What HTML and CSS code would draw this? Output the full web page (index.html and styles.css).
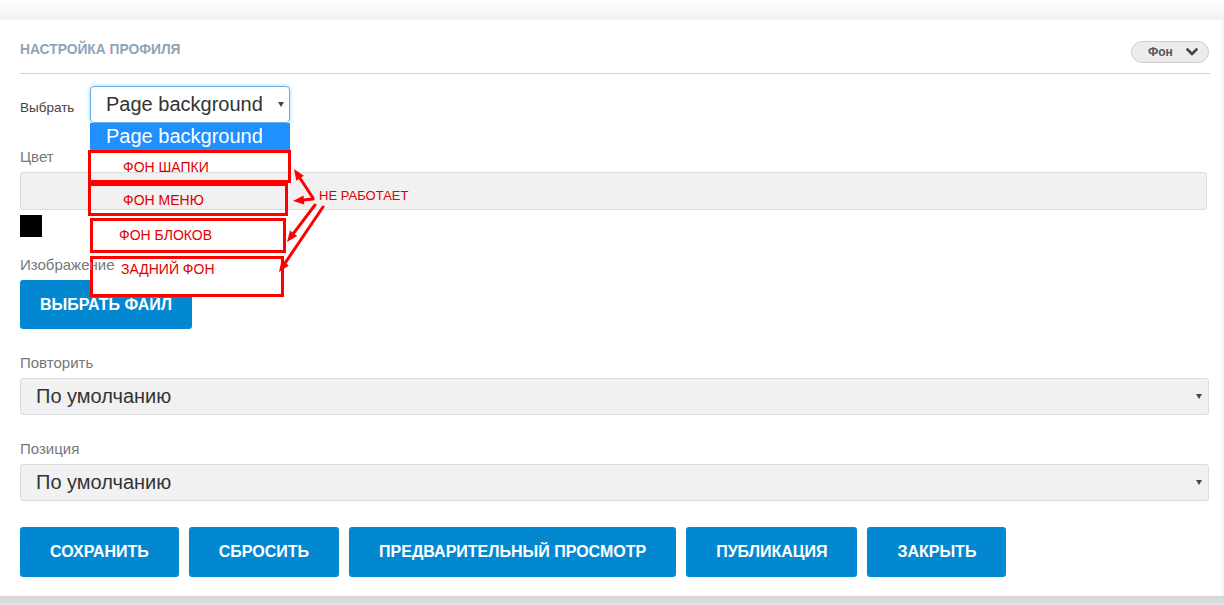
FILE: index.html
```html
<!DOCTYPE html>
<html lang="ru">
<head>
<meta charset="utf-8">
<title>Настройка профиля</title>
<link rel="stylesheet" href="styles.css">
</head>
<body>
<div class="card">
  <div class="head">
    <h2 class="title">НАСТРОЙКА ПРОФИЛЯ</h2>
    <div class="pill"><span>Фон</span><svg class="chev" width="12" height="8" viewBox="0 0 12 8"><polyline points="1.5,1.5 6,6 10.5,1.5" fill="none" stroke="#444" stroke-width="2.6" stroke-linecap="round" stroke-linejoin="round"/></svg></div>
  </div>

  <div class="pick-row">
    <span class="pick-label">Выбрать</span>
    <div class="select-box"><span>Page background</span><i class="caret"></i></div>
  </div>

  <div class="group">
    <div class="label">Цвет</div>
    <div class="input"></div>
    <div class="swatch"></div>
  </div>

  <div class="group group-img">
    <div class="label label-top">Изображение</div>
    <button class="btn">ВЫБРАТЬ ФАЙЛ</button>
  </div>

  <div class="group">
    <div class="label">Повторить</div>
    <div class="select-wide"><span>По умолчанию</span><i class="caret"></i></div>
  </div>

  <div class="group">
    <div class="label">Позиция</div>
    <div class="select-wide"><span>По умолчанию</span><i class="caret"></i></div>
  </div>

  <div class="actions">
    <button class="btn btn-lg">СОХРАНИТЬ</button>
    <button class="btn btn-lg">СБРОСИТЬ</button>
    <button class="btn btn-lg">ПРЕДВАРИТЕЛЬНЫЙ ПРОСМОТР</button>
    <button class="btn btn-lg">ПУБЛИКАЦИЯ</button>
    <button class="btn btn-lg">ЗАКРЫТЬ</button>
  </div>
</div>

<div class="dropdown">Page background</div>

<div class="notes">
  <div class="box b1">ФОН ШАПКИ</div>
  <div class="box b2">ФОН МЕНЮ</div>
  <div class="box b3">ФОН БЛОКОВ</div>
  <div class="box b4">ЗАДНИЙ ФОН</div>
  <div class="note-text">НЕ РАБОТАЕТ</div>
  <svg class="arrows" width="400" height="300" viewBox="0 0 400 300">
    <g stroke="#f00" stroke-width="3" stroke-linecap="round" fill="none">
      <line x1="313" y1="198" x2="298.4" y2="175.7"/>
      <line x1="313" y1="199" x2="301" y2="200.2"/>
      <line x1="315" y1="205" x2="291.8" y2="235.6"/>
      <line x1="323" y1="207" x2="283.5" y2="265.4"/>
    </g>
    <g fill="#f00">
      <polygon points="294,169 303.8,175.7 296.3,180.7"/>
      <polygon points="293,201 303.5,195.4 304.3,204.4"/>
      <polygon points="287,242 297.2,235.9 290,230.5"/>
      <polygon points="279,272 288.9,265.4 281.5,260.4"/>
    </g>
  </svg>
</div>
</body>
</html>
```

FILE: styles.css
```css
html, body {
  margin: 0;
  padding: 0;
}
body {
  position: relative;
  width: 1224px;
  height: 605px;
  overflow: hidden;
  background: linear-gradient(to bottom, #ffffff 0, #f1f1f1 19px, #f1f1f1 20px, #d4d4d4 596px, #e2e2e2 605px);
  font-family: "Liberation Sans", Arial, sans-serif;
}
.card {
  margin-top: 20px;
  width: 1224px;
  box-sizing: border-box;
  padding: 0 15px 19px 20px;
  background: #fff;
  box-shadow: inset -4px 0 4px -3px rgba(0, 0, 0, 0.08);
}
.head {
  display: flex;
  align-items: flex-end;
  justify-content: space-between;
  height: 54px;
  box-sizing: border-box;
  padding-bottom: 10px;
  margin-right: -1px;
  border-bottom: 1px solid #cfcfcf;
}
.title {
  margin: 0 0 5px;
  font-size: 13.8px;
  line-height: 16px;
  font-weight: 700;
  color: #8fa4b8;
}
.pill {
  display: flex;
  align-items: center;
  gap: 13px;
  width: 78px;
  height: 22px;
  box-sizing: border-box;
  padding-left: 16px;
  margin-right: 1px;
  background: #ececec;
  border: 1px solid #cdcdcd;
  border-radius: 11px;
  font-size: 12px;
  font-weight: 700;
  color: #555;
}
.chev {
  display: block;
}
.pick-row {
  display: flex;
  margin-top: 12px;
  height: 37px;
}
.pick-label {
  width: 70px;
  padding-top: 14px;
  font-size: 13.5px;
  line-height: 16px;
  color: #444;
}
.select-box {
  width: 200px;
  height: 37px;
  box-sizing: border-box;
  display: flex;
  align-items: center;
  justify-content: space-between;
  padding: 0 5px 0 15px;
  border: 1px solid #66afe9;
  border-radius: 4px;
  box-shadow: 0 0 4px rgba(102, 175, 233, 0.6);
  font-size: 20px;
  color: #333;
}
.caret {
  width: 0;
  height: 0;
  border-left: 3px solid transparent;
  border-right: 3px solid transparent;
  border-top: 5px solid #444;
}
.group {
  margin-top: 25px;
}
.group-img {
  margin-top: 19px;
}
.label {
  font-size: 15px;
  line-height: 18px;
  color: #777;
  margin-bottom: 6px;
}
.label-top {
  position: relative;
  z-index: 2;
}
.input {
  height: 38px;
  box-sizing: border-box;
  margin-right: 2px;
  background: #f1f1f1;
  border: 1px solid #dcdcdc;
  border-radius: 3px;
}
.swatch {
  width: 22px;
  height: 22px;
  margin-top: 5px;
  background: #000;
}
.btn {
  display: block;
  height: 49px;
  padding: 0 20px;
  border: 0;
  border-radius: 3px;
  background: #0288d1;
  color: #fff;
  font-family: "Liberation Sans", Arial, sans-serif;
  font-size: 16px;
  font-weight: 700;
}
.select-wide {
  height: 37px;
  box-sizing: border-box;
  display: flex;
  align-items: center;
  justify-content: space-between;
  padding: 0 6px 0 15px;
  background: #f1f1f1;
  border: 1px solid #dcdcdc;
  border-radius: 3px;
  font-size: 20px;
  color: #333;
}
.actions {
  display: flex;
  gap: 10px;
  margin-top: 26px;
}
.btn-lg {
  height: 50px;
  padding: 0 30px;
}
.dropdown {
  position: absolute;
  left: 90px;
  top: 123px;
  width: 200px;
  height: 27px;
  box-sizing: border-box;
  padding-left: 16px;
  background: #1e90ff;
  color: #fff;
  font-size: 20px;
  line-height: 27px;
  z-index: 1;
}
.notes {
  position: absolute;
  left: 0;
  top: 0;
  z-index: 1;
}
.box {
  position: absolute;
  box-sizing: border-box;
  border: 3px solid #f00;
  font-size: 14px;
  line-height: 16px;
  color: #e00000;
  white-space: nowrap;
}
.b1 { left: 88px; top: 150px; width: 203px; height: 33px; padding: 6px 0 0 32px; }
.b2 { left: 88px; top: 183px; width: 200px; height: 33px; padding: 6px 0 0 32px; }
.b3 { left: 90px; top: 218px; width: 196px; height: 35px; padding: 6px 0 0 26px; }
.b4 { left: 90px; top: 256px; width: 194px; height: 41px; padding: 2px 0 0 28px; background: #fff; }
.note-text {
  position: absolute;
  left: 319px;
  top: 188px;
  font-size: 13px;
  line-height: 16px;
  color: #e00000;
  white-space: nowrap;
}
.arrows {
  position: absolute;
  left: 0;
  top: 0;
}
```
